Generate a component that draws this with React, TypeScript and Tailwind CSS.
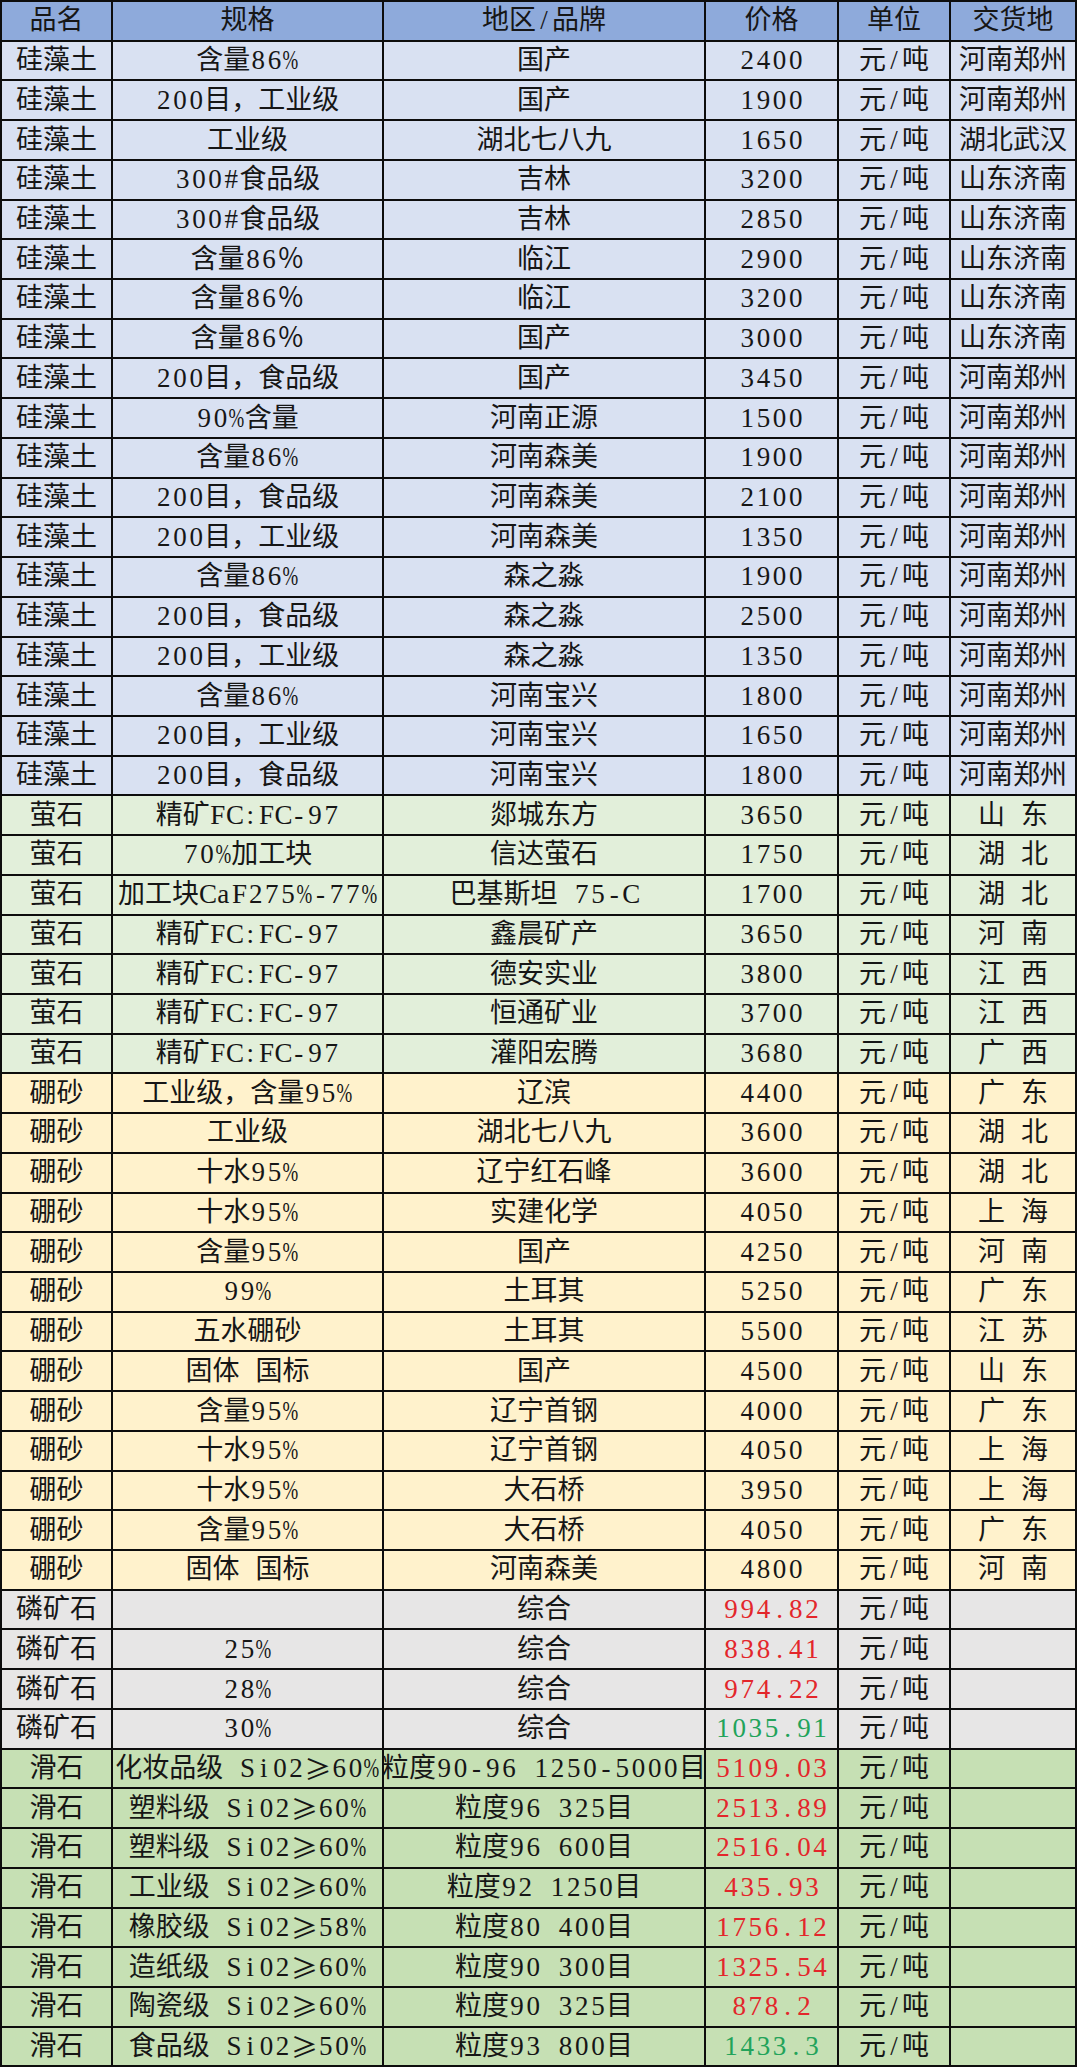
import React from "react";

type Row = {
  name: string;
  spec: string;
  brand: string;
  price: string;
  unit: string;
  loc: string;
  bg: string;
  priceColor?: string;
};

const G1 = "bg-[#d9e1f2]";
const G2 = "bg-[#e2efda]";
const G3 = "bg-[#fff2cc]";
const G4 = "bg-[#e7e6e6]";
const G5 = "bg-[#c6e0b4]";
const RED = "text-[#e3262b]";
const GREEN = "text-[#22a35a]";

const mk = (
  name: string,
  bg: string,
  data: [string, string, string, string, string?][]
): Row[] =>
  data.map(([spec, brand, price, loc, pc]) => ({
    name,
    spec,
    brand,
    price,
    unit: "元/吨",
    loc: loc.length === 2 ? `${loc[0]} ${loc[1]}` : loc,
    bg,
    priceColor: pc,
  }));

const rows: Row[] = [
  ...mk("硅藻土", G1, [
    ["含量86%", "国产", "2400", "河南郑州"],
    ["200目，工业级", "国产", "1900", "河南郑州"],
    ["工业级", "湖北七八九", "1650", "湖北武汉"],
    ["300#食品级", "吉林", "3200", "山东济南"],
    ["300#食品级", "吉林", "2850", "山东济南"],
    ["含量86％", "临江", "2900", "山东济南"],
    ["含量86％", "临江", "3200", "山东济南"],
    ["含量86％", "国产", "3000", "山东济南"],
    ["200目，食品级", "国产", "3450", "河南郑州"],
    ["90%含量", "河南正源", "1500", "河南郑州"],
    ["含量86%", "河南森美", "1900", "河南郑州"],
    ["200目，食品级", "河南森美", "2100", "河南郑州"],
    ["200目，工业级", "河南森美", "1350", "河南郑州"],
    ["含量86%", "森之淼", "1900", "河南郑州"],
    ["200目，食品级", "森之淼", "2500", "河南郑州"],
    ["200目，工业级", "森之淼", "1350", "河南郑州"],
    ["含量86%", "河南宝兴", "1800", "河南郑州"],
    ["200目，工业级", "河南宝兴", "1650", "河南郑州"],
    ["200目，食品级", "河南宝兴", "1800", "河南郑州"],
  ]),
  ...mk("萤石", G2, [
    ["精矿FC:FC-97", "郯城东方", "3650", "山东"],
    ["70%加工块", "信达萤石", "1750", "湖北"],
    ["加工块CaF275%-77%", "巴基斯坦 75-C", "1700", "湖北"],
    ["精矿FC:FC-97", "鑫晨矿产", "3650", "河南"],
    ["精矿FC:FC-97", "德安实业", "3800", "江西"],
    ["精矿FC:FC-97", "恒通矿业", "3700", "江西"],
    ["精矿FC:FC-97", "灌阳宏腾", "3680", "广西"],
  ]),
  ...mk("硼砂", G3, [
    ["工业级，含量95%", "辽滨", "4400", "广东"],
    ["工业级", "湖北七八九", "3600", "湖北"],
    ["十水95%", "辽宁红石峰", "3600", "湖北"],
    ["十水95%", "实建化学", "4050", "上海"],
    ["含量95%", "国产", "4250", "河南"],
    ["99%", "土耳其", "5250", "广东"],
    ["五水硼砂", "土耳其", "5500", "江苏"],
    ["固体 国标", "国产", "4500", "山东"],
    ["含量95%", "辽宁首钢", "4000", "广东"],
    ["十水95%", "辽宁首钢", "4050", "上海"],
    ["十水95%", "大石桥", "3950", "上海"],
    ["含量95%", "大石桥", "4050", "广东"],
    ["固体 国标", "河南森美", "4800", "河南"],
  ]),
  ...mk("磷矿石", G4, [
    ["", "综合", "994.82", "", RED],
    ["25%", "综合", "838.41", "", RED],
    ["28%", "综合", "974.22", "", RED],
    ["30%", "综合", "1035.91", "", GREEN],
  ]),
  ...mk("滑石", G5, [
    ["化妆品级 Si02≥60%", "粒度90-96 1250-5000目", "5109.03", "", RED],
    ["塑料级 Si02≥60%", "粒度96 325目", "2513.89", "", RED],
    ["塑料级 Si02≥60%", "粒度96 600目", "2516.04", "", RED],
    ["工业级 Si02≥60%", "粒度92 1250目", "435.93", "", RED],
    ["橡胶级 Si02≥58%", "粒度80 400目", "1756.12", "", RED],
    ["造纸级 Si02≥60%", "粒度90 300目", "1325.54", "", RED],
    ["陶瓷级 Si02≥60%", "粒度90 325目", "878.2", "", RED],
    ["食品级 Si02≥50%", "粒度93 800目", "1433.3", "", GREEN],
  ]),
];

// Renders text with fixed-pitch half-width Latin characters, like the
// spreadsheet's Song-style font.
function T({ text }: { text: string }) {
  const out: React.ReactNode[] = [];
  let buf = "";
  const flush = () => {
    if (buf) {
      out.push(<span key={`c${out.length}`}>{buf}</span>);
      buf = "";
    }
  };
  for (const ch of text) {
    const code = ch.codePointAt(0) ?? 0;
    if (ch === "%") {
      flush();
      out.push(
        <span key={`p${out.length}`} className="inline-flex w-[0.6em] justify-center">
          <span className="inline-block scale-x-[0.7]">%</span>
        </span>
      );
    } else if (code < 128) {
      flush();
      out.push(
        <span key={`a${out.length}`} className="inline-block w-[0.6em] text-center">
          {ch === " " ? "\u00a0" : ch}
        </span>
      );
    } else if (ch === "≥") {
      flush();
      out.push(
        <span
          key={`g${out.length}`}
          className="inline-block w-[1em] text-center font-['Noto_Sans_CJK_SC']"
        >
          {ch}
        </span>
      );
    } else {
      buf += ch;
    }
  }
  flush();
  return <span className="inline-flex items-center whitespace-nowrap">{out}</span>;
}

const cell =
  "flex items-center justify-center whitespace-nowrap border-r-2 border-b-2 border-[#0d0d0d] overflow-visible";

const gridCols = "grid grid-cols-[111px_271px_322px_133px_112px_1fr]";

export default function App() {
  return (
    <div
      className="w-[1077px] h-[2067px] flex flex-col border-l-2 border-t-2 border-[#0d0d0d] bg-white text-[#161616] text-[27px] leading-none overflow-hidden"
      style={{ fontFamily: '"Liberation Serif", "Noto Sans CJK SC", serif' }}
    >
      <div className={`${gridCols} flex-1 min-h-0 bg-[#8eaadb]`}>
        <div className={cell}>品名</div>
        <div className={cell}>规格</div>
        <div className={cell}>
          <T text="地区/品牌" />
        </div>
        <div className={cell}>价格</div>
        <div className={cell}>单位</div>
        <div className={cell}>交货地</div>
      </div>
      {rows.map((r, i) => (
        <div key={i} className={`${gridCols} flex-1 min-h-0 ${r.bg}`}>
          <div className={cell}>{r.name}</div>
          <div className={`${cell} relative z-10`}>
            <T text={r.spec} />
          </div>
          <div className={cell}>
            <T text={r.brand} />
          </div>
          <div className={`${cell} ${r.priceColor ?? ""}`}>
            <T text={r.price} />
          </div>
          <div className={cell}>
            <T text={r.unit} />
          </div>
          <div className={cell}>
            <T text={r.loc} />
          </div>
        </div>
      ))}
    </div>
  );
}
